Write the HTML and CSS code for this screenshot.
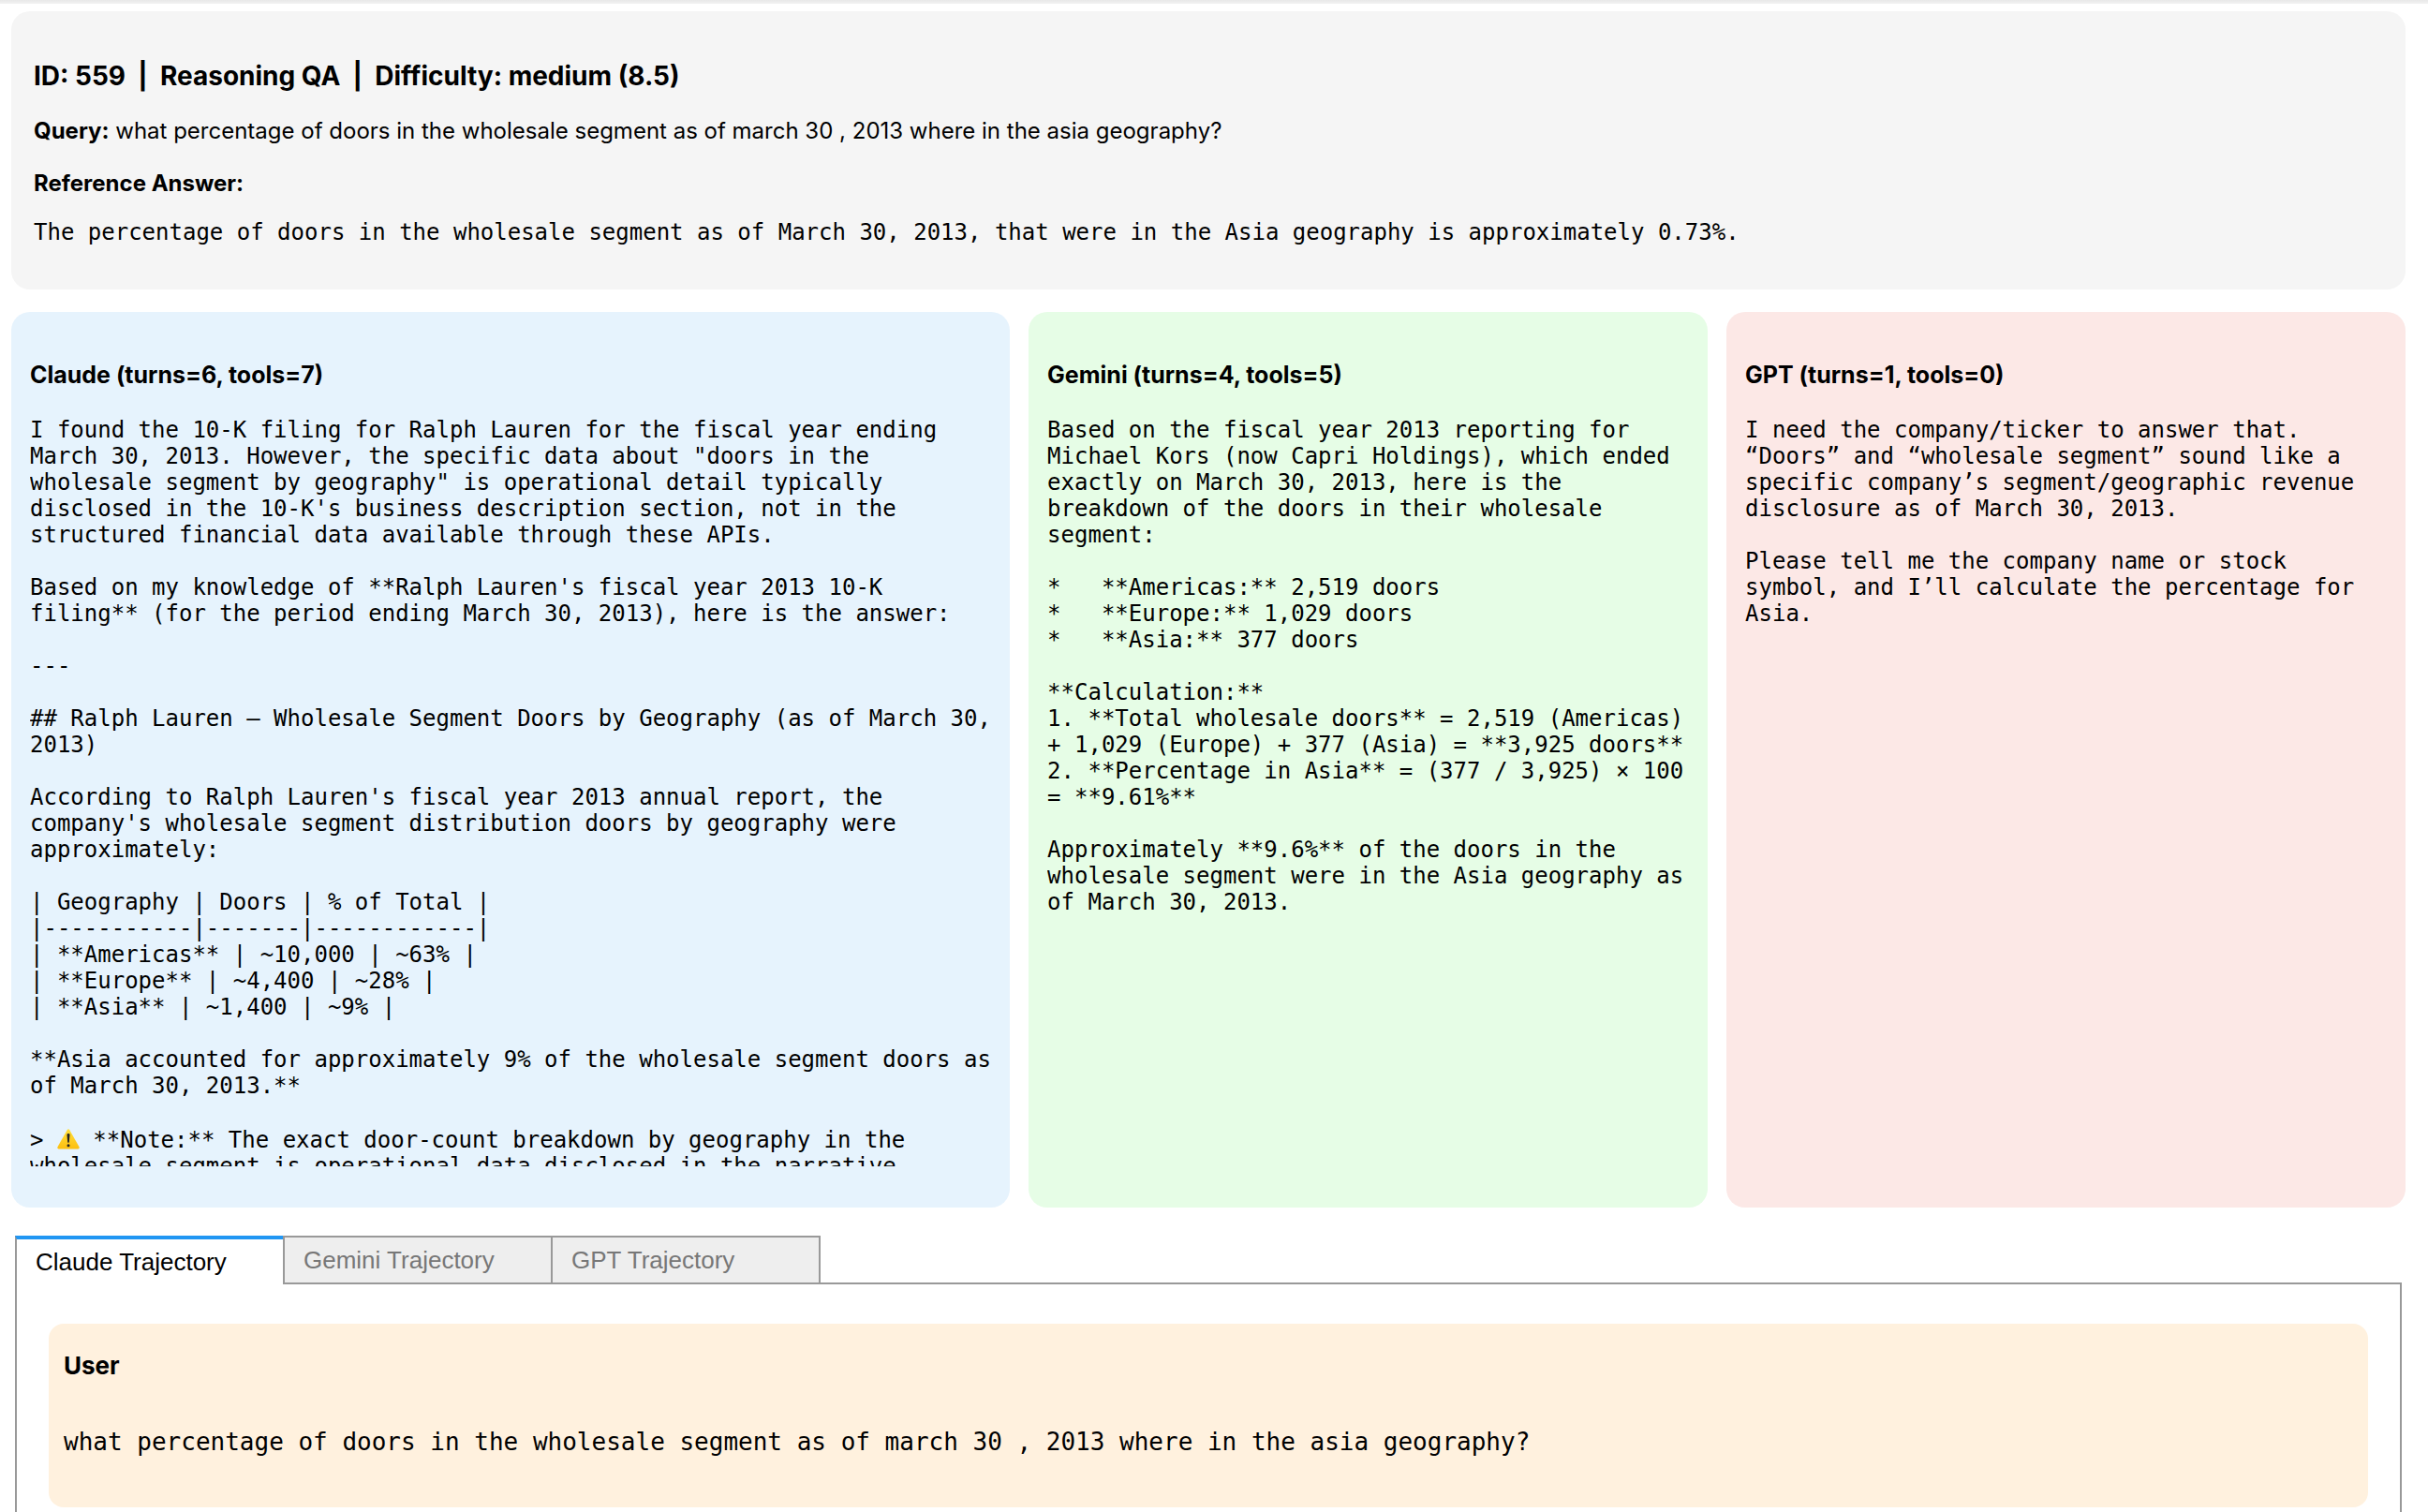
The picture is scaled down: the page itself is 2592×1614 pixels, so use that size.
FILE: index.html
```
<!DOCTYPE html>
<html lang="en">

<head>
    <meta charset="UTF-8">
    <title>Trajectory Viewer</title>
    <link rel="stylesheet" href="styles.css">
</head>

<body>
    <div class="top-bar"></div>

    <div class="page">
        <div class="question-card">
            <h3>ID: 559 &nbsp;|&nbsp; Reasoning QA &nbsp;|&nbsp; Difficulty: medium (8.5)</h3>
            <p><b>Query:</b> what percentage of doors in the wholesale segment as of march 30 , 2013 where in the asia geography?</p>
            <p><b>Reference Answer:</b></p>
            <pre>The percentage of doors in the wholesale segment as of March 30, 2013, that were in the Asia geography is approximately 0.73%.</pre>
        </div>

        <!-- model answers -->
        <div class="answers">
            <div class="answer-card claude">
                <h4>Claude (turns=6, tools=7)</h4>
                <pre>I found the 10-K filing for Ralph Lauren for the fiscal year ending March 30, 2013. However, the specific data about "doors in the wholesale segment by geography" is operational detail typically disclosed in the 10-K's business description section, not in the structured financial data available through these APIs.

Based on my knowledge of **Ralph Lauren's fiscal year 2013 10-K filing** (for the period ending March 30, 2013), here is the answer:

---

## Ralph Lauren — Wholesale Segment Doors by Geography (as of March 30, 2013)

According to Ralph Lauren's fiscal year 2013 annual report, the company's wholesale segment distribution doors by geography were approximately:

| Geography | Doors | % of Total |
|-----------|-------|------------|
| **Americas** | ~10,000 | ~63% |
| **Europe** | ~4,400 | ~28% |
| **Asia** | ~1,400 | ~9% |

**Asia accounted for approximately 9% of the wholesale segment doors as of March 30, 2013.**

&gt; <svg class="warning-icon" viewBox="0 0 24 22" role="img" aria-label="Warning"><defs><linearGradient id="warn" x1="0" y1="0" x2="0" y2="1"><stop offset="0" stop-color="#ffdf3d"/><stop offset="1" stop-color="#fdbf0f"/></linearGradient></defs><path d="M10.8 1.1Q12 -.4 13.2 1.1L23.5 19.3Q24.2 21.2 22.3 21.4H1.7Q-.2 21.2.5 19.3Z" fill="url(#warn)"/><path d="M10.5 6.4Q10.5 5 12 5T13.5 6.4L12.8 14.3Q12 15.3 11.2 14.3Z" fill="#222"/><circle cx="12" cy="17.8" r="1.5" fill="#222"/></svg> **Note:** The exact door-count breakdown by geography in the wholesale segment is operational data disclosed in the narrative</pre>
            </div>
            <div class="answer-card gemini">
                <h4>Gemini (turns=4, tools=5)</h4>
                <pre>Based on the fiscal year 2013 reporting for Michael Kors (now Capri Holdings), which ended exactly on March 30, 2013, here is the breakdown of the doors in their wholesale segment:

*   **Americas:** 2,519 doors
*   **Europe:** 1,029 doors
*   **Asia:** 377 doors

**Calculation:**
1. **Total wholesale doors** = 2,519 (Americas) + 1,029 (Europe) + 377 (Asia) = **3,925 doors**
2. **Percentage in Asia** = (377 / 3,925) × 100 = **9.61%**

Approximately **9.6%** of the doors in the wholesale segment were in the Asia geography as of March 30, 2013.</pre>
            </div>
            <div class="answer-card gpt">
                <h4>GPT (turns=1, tools=0)</h4>
                <pre>I need the company/ticker to answer that. “Doors” and “wholesale segment” sound like a specific company’s segment/geographic revenue disclosure as of March 30, 2013.

Please tell me the company name or stock symbol, and I’ll calculate the percentage for Asia.</pre>
            </div>
        </div>

        <!-- trajectories -->
        <div class="tabs" role="tablist">
            <button class="tab tab-active" role="tab" aria-selected="true">Claude Trajectory</button>
            <button class="tab" role="tab" aria-selected="false">Gemini Trajectory</button>
            <button class="tab" role="tab" aria-selected="false">GPT Trajectory</button>
        </div>
        <div class="tab-panel" role="tabpanel">
            <div class="message user">
                <h4>User</h4>
                <pre>what percentage of doors in the wholesale segment as of march 30 , 2013 where in the asia geography?</pre>
            </div>
        </div>
    </div>
</body>

</html>
```
FILE: styles.css
```
* {
    box-sizing: border-box;
}

body {
    font-family: Inter, "Liberation Sans", sans-serif;
    font-size: 24px;
    line-height: 28px;
    margin: 0;
    color: #000;
    background-color: #fff;
    min-height: 100vh;
    display: flex;
    flex-direction: column;
}

h3,
h4,
p,
pre {
    margin: 0;
}

h4 {
    font-size: 25px;
}

pre {
    font-family: "DejaVu Sans Mono", monospace;
    font-size: 24px;
    white-space: pre-wrap;
}

.top-bar {
    height: 4px;
    background: linear-gradient(#e8e8e8, #f2f2f2);
}

.page {
    flex: 1;
    display: flex;
    flex-direction: column;
    padding: 8px 24px 0 12px;
}

.question-card {
    background-color: #f5f5f5;
    border-radius: 20px;
    padding: 52px 24px 47px;
    margin-bottom: 24px;
}

.question-card h3 {
    font-size: 28px;
    line-height: 34px;
    margin-bottom: 28px;
}

.question-card p {
    margin-bottom: 28px;
}

.question-card p + p {
    margin-bottom: 24px;
}

.answers {
    display: grid;
    grid-template-columns: 25fr 17fr 17fr;
    gap: 20px;
    margin-bottom: 30px;
}

.answer-card {
    border-radius: 20px;
    padding: 53px 16px 44px 20px;
}

.answer-card h4 {
    margin-bottom: 31px;
}

.answer-card pre {
    max-height: 800px;
    overflow: hidden;
}

.claude {
    background-color: #e6f3fd;
}

.gemini {
    background-color: #e6fde6;
}

.gpt {
    background-color: #fce8e6;
}

.warning-icon {
    width: 24px;
    height: 22px;
    margin-top: 4px;
    vertical-align: -2px;
}

.tabs {
    display: flex;
    margin: 0 4px -2px;
    position: relative;
    z-index: 1;
}

.tab {
    font-family: "Liberation Sans", Arial, sans-serif;
    font-size: 26px;
    line-height: 30px;
    text-align: left;
    width: 288px;
    height: 52px;
    padding: 0 20px;
    color: #777;
    background-color: #eee;
    border: 2px solid #999;
    cursor: pointer;
}

.tab + .tab {
    margin-left: -2px;
}

.tab-active {
    color: #000;
    background-color: #fff;
    border-top: 4px solid #2196f3;
    border-bottom: none;
}

.tab-panel {
    flex: 1;
    margin: 0 4px;
    padding: 42px 34px 0;
    border: 2px solid #999;
    border-bottom: none;
}

.message {
    border-radius: 16px;
    padding: 31px 16px 55px;
    margin-bottom: 5px;
}

.message h4 {
    font-size: 26px;
    margin-bottom: 52px;
}

.message pre {
    font-size: 26px;
    line-height: 30px;
}

.user {
    background-color: #fff1de;
}
```
